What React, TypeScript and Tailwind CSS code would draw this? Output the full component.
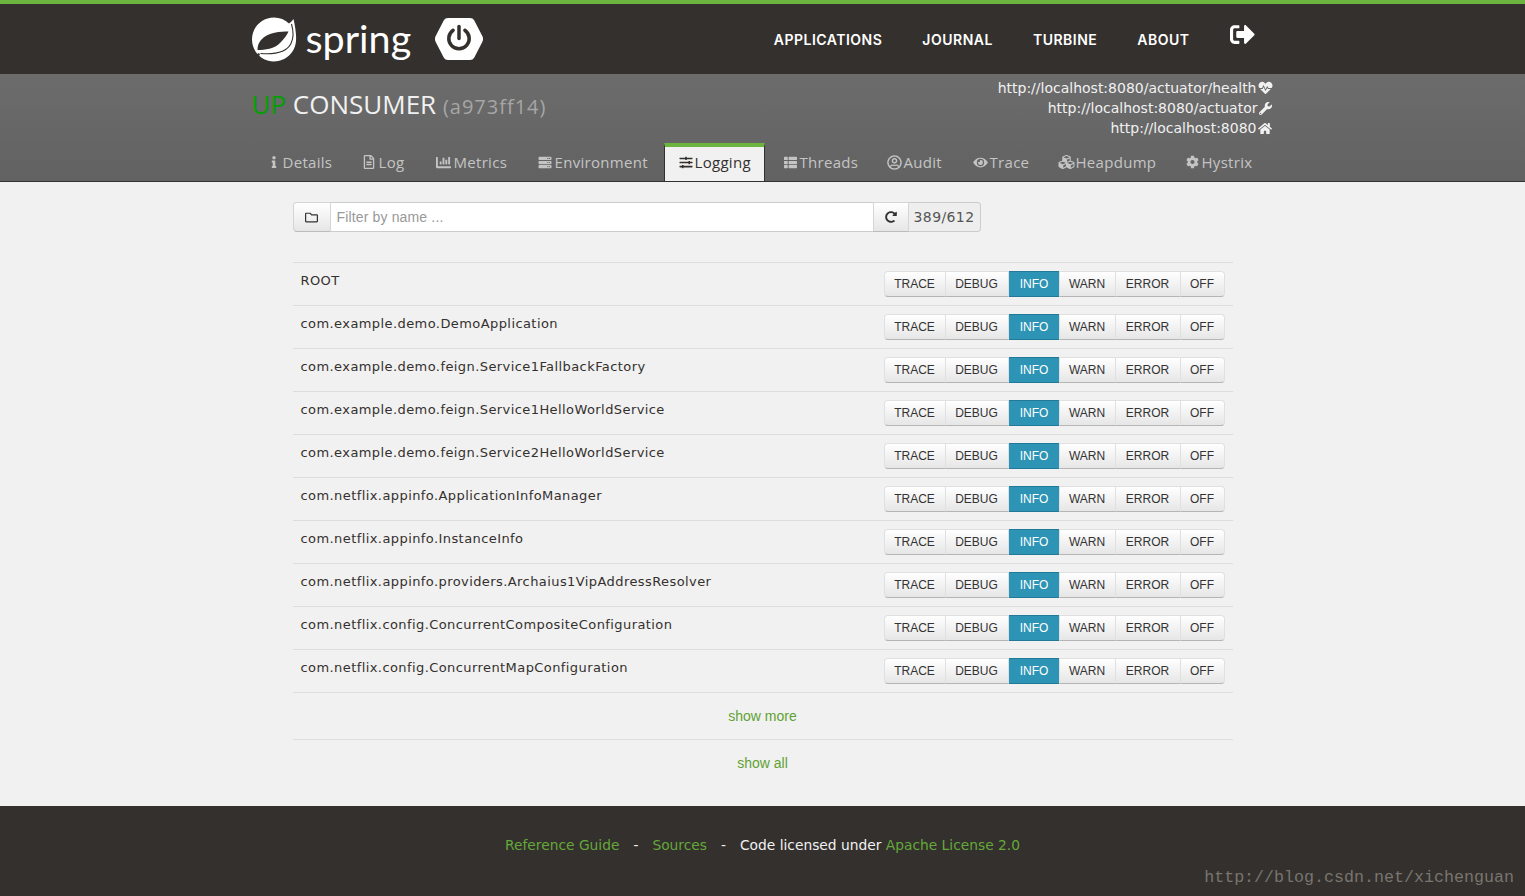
import {
  FaChartBar,
  FaCog,
  FaCubes,
  FaEye,
  FaHeartbeat,
  FaHome,
  FaInfo,
  FaRedoAlt,
  FaRegFileAlt,
  FaRegFolder,
  FaRegUserCircle,
  FaServer,
  FaSignOutAlt,
  FaSlidersH,
  FaThList,
  FaWrench,
} from "react-icons/fa";

const navLinks = [
  { label: "APPLICATIONS", ml: "ml-0" },
  { label: "JOURNAL", ml: "ml-10" },
  { label: "TURBINE", ml: "ml-10" },
  { label: "ABOUT", ml: "ml-10" },
];

const tabs = [
  { label: "Details", icon: <FaInfo className="w-[12px] h-[12px]" />, cls: "w-[97px] pl-[17px]", gap: "gap-[3px]" },
  { label: "Log", icon: <FaRegFileAlt className="w-[14px] h-[14px]" />, cls: "w-[74px] pl-[14px]", gap: "gap-[3px]" },
  { label: "Metrics", icon: <FaChartBar className="w-[17px] h-[15px]" />, cls: "w-[100px] pl-[13px]", gap: "gap-[2px]" },
  { label: "Environment", icon: <FaServer className="w-[16px] h-[13px]" />, cls: "w-[142px] pl-[15px]", gap: "gap-[2px]" },
  { label: "Logging", icon: <FaSlidersH className="w-[14px] h-[13px]" />, cls: "w-[101px] pl-[14px]", gap: "gap-[2px]", active: true },
  { label: "Threads", icon: <FaThList className="w-[15px] h-[13px]" />, cls: "w-[107px] pl-[18px]", gap: "gap-[2px]" },
  { label: "Audit", icon: <FaRegUserCircle className="w-[15px] h-[15px]" />, cls: "w-[85px] pl-[15px]", gap: "gap-[2px]" },
  { label: "Trace", icon: <FaEye className="w-[15px] h-[13px]" />, cls: "w-[87px] pl-[16px]", gap: "gap-[2px]" },
  { label: "Heapdump", icon: <FaCubes className="w-[19px] h-[16px]" />, cls: "w-[127px] pl-[13px]", gap: "gap-0" },
  { label: "Hystrix", icon: <FaCog className="w-[13px] h-[14px]" />, cls: "w-[93px] pl-[15px]", gap: "gap-[3px]" },
];

const loggers = [
  "ROOT",
  "com.example.demo.DemoApplication",
  "com.example.demo.feign.Service1FallbackFactory",
  "com.example.demo.feign.Service1HelloWorldService",
  "com.example.demo.feign.Service2HelloWorldService",
  "com.netflix.appinfo.ApplicationInfoManager",
  "com.netflix.appinfo.InstanceInfo",
  "com.netflix.appinfo.providers.Archaius1VipAddressResolver",
  "com.netflix.config.ConcurrentCompositeConfiguration",
  "com.netflix.config.ConcurrentMapConfiguration",
];

const levels = [
  { label: "TRACE", w: "w-[62px]" },
  { label: "DEBUG", w: "w-[64px]" },
  { label: "INFO", w: "w-[51px]", active: true },
  { label: "WARN", w: "w-[57px]" },
  { label: "ERROR", w: "w-[66px]" },
  { label: "OFF", w: "w-[45px]" },
];

function SpringLeaf() {
  return (
    <svg viewBox="0 0 46 46" className="w-[46px] h-[46px]">
      <path
        fill="#fff"
        d="M42.500 3c-1.200 1.800-2.700 3.200-4.500 4.400C34 3.700 28.800 1.500 23 1.500 10.800 1.500 1 11.300 1 23.500S10.800 45.500 23 45.500c11.700 0 21.300-9 22-20.700.5-6.300-.7-13.600-2.500-21.800z"
      />
      <path
        fill="#34302d"
        d="M37.500 15.500C30 15.500 17 16 10 24c-2.300 2.700-3.600 6-3.500 10 7.500 0 17-1 23-7.500 3.500-3.500 6.500-7.500 8-11z"
      />
      <path
        fill="none"
        stroke="#34302d"
        strokeWidth="1.100"
        d="M40.500 8c2 7 2.500 13.500-.5 19.500-5 10-18 11-30.500 10"
      />
      <circle cx="7.500" cy="38.500" r="1.300" fill="#34302d" />
    </svg>
  );
}

function BootHex() {
  return (
    <svg viewBox="0 0 48 42" className="w-[48px] h-[42px]">
      <path
        fill="#fff"
        d="M13 0h22c1.800 0 3.300.8 4.300 2.500l8 15.500c1 1.900 1 4.100 0 6l-8 15.500c-1 1.700-2.500 2.500-4.300 2.500H13c-1.800 0-3.300-.8-4.300-2.500l-8-15.500c-1-1.900-1-4.100 0-6l8-15.500C9.700.8 11.200 0 13 0z"
      />
      <path fill="none" stroke="#34302d" strokeWidth="3.500" strokeLinecap="round" d="M18.100 12.300a10.200 10.200 0 1 0 11.800 0" />
      <path fill="none" stroke="#34302d" strokeWidth="3.500" strokeLinecap="round" d="M24 8.500v12" />
    </svg>
  );
}

export default function App() {
  return (
    <div className="min-h-[896px] flex flex-col bg-[#f1f1f1] font-['DejaVu_Sans',sans-serif]">
      <header className="h-[74px] shrink-0 border-t-4 border-[#6db33f] bg-[#34302d]">
        <div className="w-[1024px] mx-auto flex items-center h-full">
          <SpringLeaf />
          <span className="ml-[9px] w-[105px] text-[39.5px] leading-none text-white font-['Lato',sans-serif] mb-[3px]">
            spring
          </span>
          <div className="ml-6">
            <BootHex />
          </div>
          <nav className="ml-auto flex items-center pr-[20px] font-['Inter',sans-serif]">
            {navLinks.map((l) => (
              <a
                key={l.label}
                className={`${l.ml} text-[14px] font-semibold tracking-[0.5px] text-white`}
              >
                {l.label}
              </a>
            ))}
            <FaSignOutAlt className="ml-10 mb-[10px] w-[25px] h-[25px] text-white" />
          </nav>
        </div>
      </header>

      <section className="h-[108px] shrink-0 bg-gradient-to-b from-[#6c6c6c] to-[#626262] border-b border-[#34302d]">
        <div className="w-[1024px] mx-auto h-full flex flex-col">
          <div className="flex justify-between h-[70px]">
            <h1 className="mt-[14px] ml-px text-[26px] leading-[32px] text-[#f1f1f1] font-['Open_Sans',sans-serif]">
              <span className="text-[#00a000]">UP</span> CONSUMER{" "}
              <small className="text-[20px] text-[#a6a6a6] tracking-[1px]">(a973ff14)</small>
            </h1>
            <ul className="mt-[4px] mr-[2px] text-[14px] leading-[20px] text-[#f1f1f1] text-right">
              <li className="flex items-center justify-end gap-px">
                http://localhost:8080/actuator/health <FaHeartbeat className="w-[15px] h-[14px]" />
              </li>
              <li className="flex items-center justify-end gap-px pr-px">
                http://localhost:8080/actuator <FaWrench className="w-[13px] h-[13px]" />
              </li>
              <li className="flex items-center justify-end gap-px pr-px">
                http://localhost:8080 <FaHome className="w-[14px] h-[13px]" />
              </li>
            </ul>
          </div>
          <div className="flex h-[38px] font-['Open_Sans',sans-serif] tracking-[0.3px]">
            {tabs.map((t) =>
              t.active ? (
                <a
                  key={t.label}
                  className={`${t.cls} ${t.gap} relative z-10 h-[38px] flex items-center pb-[4px] border-t-4 border-x border-t-[#6db33f] border-x-[#34302d] bg-[#f1f1f1] text-[15px] text-[#34302d]`}
                >
                  {t.icon}
                  {t.label}
                </a>
              ) : (
                <a
                  key={t.label}
                  className={`${t.cls} ${t.gap} relative h-[38px] flex items-center text-[15px] text-[#c4c4c4]`}
                >
                  {t.icon}
                  {t.label}
                  <span className="absolute left-px right-0 bottom-0 h-px bg-[#626262]" />
                </a>
              ),
            )}
          </div>
        </div>
      </section>

      <main className="flex-1 w-[940px] mx-auto">
        <div className="mt-[20px] flex h-[30px] w-[688px] text-[14px]">
          <button className="w-[38px] flex items-center justify-center rounded-l-[4px] border border-[#d5d5d5] border-b-[#bbb] bg-gradient-to-b from-white to-[#e6e6e6] text-[#333]">
            <FaRegFolder className="w-[13px] h-[13px]" />
          </button>
          <div className="w-[542px] flex items-center pl-[6px] border-y border-[#ccc] bg-white text-[#999] tracking-[0.15px] font-['Liberation_Sans',sans-serif]">
            Filter by name ...
          </div>
          <button className="w-[36px] flex items-center justify-center border border-[#d5d5d5] border-b-[#bbb] bg-gradient-to-b from-white to-[#e6e6e6] text-[#333]">
            <FaRedoAlt className="w-[12px] h-[12px]" />
          </button>
          <div className="w-[72px] flex items-center justify-center rounded-r-[4px] border-y border-r border-[#ccc] bg-[#eee] text-[14px] tracking-[0.4px] text-[#555]">
            389/612
          </div>
        </div>

        <div className="mt-[30px]">
          {loggers.map((name) => (
            <div key={name} className="h-[43px] border-t border-[#ddd] flex justify-between pl-2 pr-2">
              <span className="mt-[9px] text-[13px] leading-[18px] tracking-[0.42px] text-[#34302d]">{name}</span>
              <div className="mt-[8px] flex h-[26px] w-[341px] text-[12px] font-['Liberation_Sans',sans-serif]">
                {levels.map((lvl, i) => (
                  <button
                    key={lvl.label}
                    className={`${lvl.w} ${
                      lvl.active
                        ? "bg-[#2d94b5] text-white border-[#217a97] border-y"
                        : "bg-gradient-to-b from-white to-[#e6e6e6] text-[#333] border border-[#e0e0e0] border-b-[#b5b5b5] -ml-px first:ml-0"
                    } ${i === 0 ? "rounded-l-[4px]" : ""} ${i === levels.length - 1 ? "rounded-r-[4px]" : ""}`}
                  >
                    {lvl.label}
                  </button>
                ))}
              </div>
            </div>
          ))}
          <div className="h-[47px] border-t border-[#ddd] flex items-center justify-center text-[14px] text-[#5fa134] font-['Liberation_Sans',sans-serif]">
            show more
          </div>
          <div className="h-[47px] border-t border-[#ddd] flex items-center justify-center text-[14px] text-[#5fa134] font-['Liberation_Sans',sans-serif]">
            show all
          </div>
        </div>
      </main>

      <footer className="relative h-[90px] shrink-0 bg-[#34302d] flex justify-center pt-[29px] text-[13.8px] leading-[20px] text-[#f1f1f1]">
        <div>
          <a className="text-[#64a83a]">Reference Guide</a>
          <span className="mx-[14px]">-</span>
          <a className="text-[#64a83a]">Sources</a>
          <span className="mx-[14px]">-</span>
          Code licensed under <a className="text-[#64a83a]">Apache License 2.0</a>
        </div>
        <span className="absolute right-[11px] bottom-[6px] text-[16.67px] leading-[24px] text-[#78756f] font-['Liberation_Mono',monospace]">
          http://blog.csdn.net/xichenguan
        </span>
      </footer>
    </div>
  );
}
